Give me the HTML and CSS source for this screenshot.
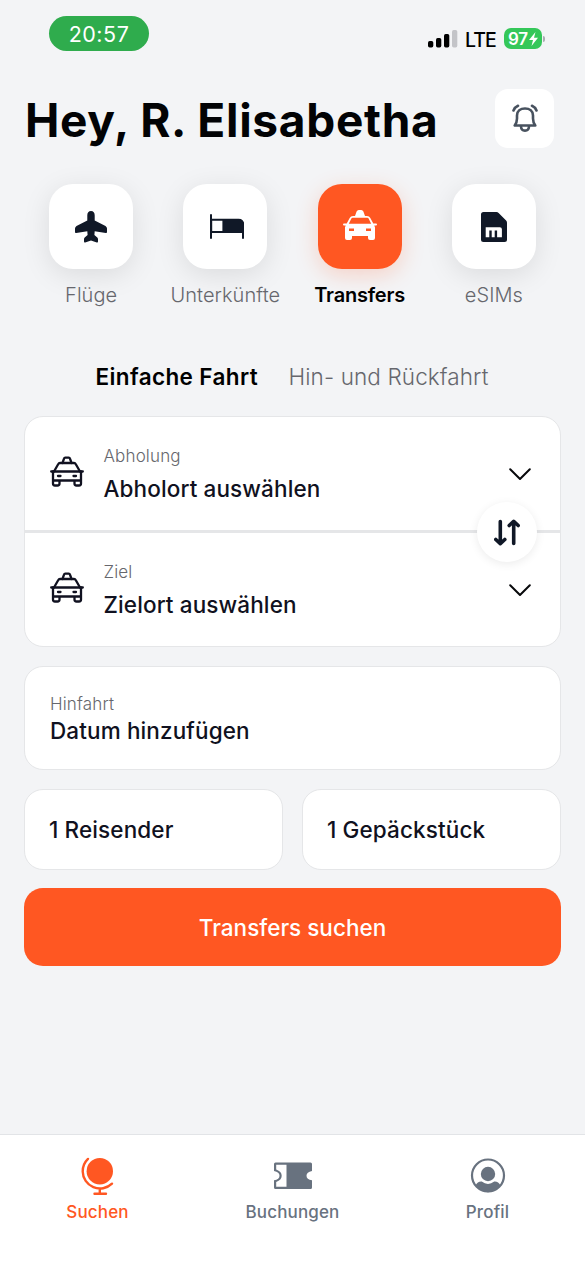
FILE: index.html
```
<!DOCTYPE html>
<html lang="de">
<head>
<meta charset="utf-8">
<title>Transfers</title>
<link rel="stylesheet" href="styles.css">
</head>
<body>
<svg class="defs" width="0" height="0" aria-hidden="true">
  <symbol id="taxi" viewBox="0 0 34 31">
    <g fill="none" stroke="currentColor" stroke-width="2.300" stroke-linecap="round" stroke-linejoin="round">
      <path d="M12.500 7 14 2.700Q14.300 1.700 15.300 1.700H18.700Q19.700 1.700 20 2.700L21.500 7"/>
      <path d="M4 15.500 8.300 8Q8.800 7 10 7H24Q25.200 7 25.700 8L30 15.500"/>
      <path d="M1.200 15.500H32.800"/>
      <path d="M3 15.500V27.500Q3 29.500 5 29.500H7.500Q9.500 29.500 9.500 27.500V24.500H24.500V27.500Q24.500 29.500 26.500 29.500H29Q31 29.500 31 27.500V15.500M3 24.500H31"/>
      <path d="M8 20H10.500M23.500 20H26"/>
    </g>
  </symbol>
  <symbol id="chevron" viewBox="0 0 22 13">
    <path d="M1.200 1.200 11 11 20.800 1.200" fill="none" stroke="currentColor" stroke-width="2" stroke-linecap="round" stroke-linejoin="round"/>
  </symbol>
</svg>

<div class="status">
  <div class="clock"><span>20:57</span></div>
  <div class="signals">
    <svg class="bars" viewBox="0 0 30 19"><rect x="0" y="12" width="5.300" height="6.500" rx="1.700"/><rect x="8" y="9" width="5.300" height="9.500" rx="1.700"/><rect x="16" y="5" width="5.300" height="13.500" rx="1.700"/><rect x="24" y="1" width="5.300" height="17.500" rx="1.700" fill="#c3c4c8"/></svg>
    <span class="lte">LTE</span>
    <div class="battery"><span>97</span><svg viewBox="0 0 9 14"><path d="M6.500 0 0 8H4L2.500 14 9 5.700H5Z" fill="#fff"/></svg></div>
    <i class="battery-cap"></i>
  </div>
</div>

<header class="header">
  <h1>Hey, R. Elisabetha</h1>
  <button class="bell" aria-label="Mitteilungen">
    <svg viewBox="0 0 26 28" fill="none" stroke="#48525f" stroke-width="2.600" stroke-linecap="round" stroke-linejoin="round">
      <path d="M2.700 21.500H23.300C21.800 19.500 21 17.500 21 14.500V11.500C21 7 17.500 4.500 13 4.500S5 7 5 11.500V14.500C5 17.500 4.200 19.500 2.700 21.500Z"/>
      <path d="M9 22.500C9.300 28 16.700 28 17 22.500M1.500 6.500Q2.800 3.200 6 1.800M24.500 6.500Q23.200 3.200 20 1.800"/>
    </svg>
  </button>
</header>

<nav class="products">
  <a class="product"><span class="tile"><svg class="plane" viewBox="0 0 32 32"><path d="M16 0C18.400 0 19.700 1.700 19.700 4.200V9.600L30.500 15Q32 16 32 17.500V21Q32 22.200 30.800 21.900L19.700 20.300 19.400 24 22.300 26.500Q23 27.200 23 28.200V30.500Q23 31.800 21.800 31.400L16 29.500 10.200 31.400Q9 31.800 9 30.500V28.200Q9 27.200 9.700 26.500L12.600 24 12.300 20.300 1.200 21.900Q0 22.200 0 21V17.500Q0 16 1.500 15L12.300 9.600V4.200C12.300 1.700 13.600 0 16 0Z"/></svg></span><span class="name">Flüge</span></a>
  <a class="product"><span class="tile"><svg class="bed" viewBox="0 0 34 25"><path d="M1 1V24M33 9V24" stroke="#101827" stroke-width="2" stroke-linecap="round"/><path d="M1 4.700H28.500Q34 4.700 34 10.200V19H1ZM2.200 6.700V17H12.400V6.700Z" fill-rule="evenodd"/></svg></span><span class="name">Unterkünfte</span></a>
  <a class="product active"><span class="tile"><svg class="cab" viewBox="0 0 34 30"><path fill-rule="evenodd" d="M12 6 13.600 1.600Q14.200 0 15.800 0H18.200Q19.800 0 20.400 1.600L22 6H24Q26.300 6 27.300 8L30.300 13.500H33Q34 13.500 34 14.500T33 15.500H31.300L32 17.500V28Q32 30 30 30H27Q25 30 25 28V26H9V28Q9 30 7 30H4Q2 30 2 28V17.500L2.700 15.500H1Q0 15.500 0 14.500T1 13.500H3.700L6.700 8Q7.700 6 10 6ZM9.500 7.700Q8.800 7.700 8.400 8.400L5.800 13.800H28.200L25.600 8.400Q25.200 7.700 24.500 7.700ZM6 18.500V21H11V18.500ZM23 18.500V21H28V18.500Z"/></svg></span><span class="name name-active">Transfers</span></a>
  <a class="product"><span class="tile"><svg class="sim" viewBox="0 0 26 30"><path fill-rule="evenodd" d="M2.500 0H15.500Q16.700 0 17.600 .9L25.100 8.600Q26 9.500 26 10.700V27.500Q26 30 23.500 30H2.500Q0 30 0 27.500V2.500Q0 0 2.500 0ZM4.700 15.200V25.300H8.300V18.500H10.700V25.300H13.700V18.500H16.100V25.300H20.900V17.200Q20.900 15.200 18.900 15.200Z"/></svg></span><span class="name">eSIMs</span></a>
</nav>

<div class="trip">
  <span class="trip-on">Einfache Fahrt</span>
  <span class="trip-off">Hin- und Rückfahrt</span>
</div>

<main class="form">
  <section class="card route">
    <div class="stop">
      <svg class="taxi"><use href="#taxi"/></svg>
      <div class="field"><span class="label">Abholung</span><span class="value">Abholort auswählen</span></div>
      <svg class="chevron"><use href="#chevron"/></svg>
    </div>
    <div class="stop">
      <svg class="taxi"><use href="#taxi"/></svg>
      <div class="field"><span class="label">Ziel</span><span class="value">Zielort auswählen</span></div>
      <svg class="chevron"><use href="#chevron"/></svg>
    </div>
    <button class="swap" aria-label="Tauschen">
      <svg viewBox="0 0 26 27" fill="none" stroke="#101827" stroke-width="3.600" stroke-linecap="round" stroke-linejoin="round"><path d="M6.300 2.500V24.500M1.800 20.500 6.300 24.700 10.800 20.500M19.700 24.500V2.500M15.200 6.500 19.700 2.300 24.200 6.500"/></svg>
    </button>
  </section>
  <section class="card date"><span class="label">Hinfahrt</span><span class="value">Datum hinzufügen</span></section>
  <div class="pair">
    <section class="card"><span class="value">1 Reisender</span></section>
    <section class="card"><span class="value">1 Gepäckstück</span></section>
  </div>
  <button class="submit"><span>Transfers suchen</span></button>
</main>

<nav class="tabbar">
  <a class="tab on"><svg viewBox="0 0 38 38"><circle cx="20.800" cy="14.200" r="13.200" fill="currentColor"/><path d="M9 1.900A17.300 17.300 0 0 0 3.700 14.500A17.300 17.300 0 0 0 33 26.700M20.800 31.500V36.500M15.500 36.700H27" fill="none" stroke="currentColor" stroke-width="2.400" stroke-linecap="round"/></svg><span>Suchen</span></a>
  <a class="tab"><svg viewBox="0 0 38 38"><path fill="currentColor" fill-rule="evenodd" d="M1.500 5.500H36.500Q38 5.500 38 7V14Q32.500 15 32.500 18.700T38 23.300V30.500Q38 32 36.500 32H1.500Q0 32 0 30.500V23.300Q5.500 22.300 5.500 18.700T0 14V7Q0 5.500 1.500 5.500ZM2.200 7.700V12.500Q7.700 14.500 7.700 18.700T2.200 25V29.800H12.500V7.700Z"/></svg><span>Buchungen</span></a>
  <a class="tab"><svg viewBox="0 0 38 38"><circle cx="19" cy="18.500" r="16" fill="none" stroke="currentColor" stroke-width="2.200"/><circle cx="19" cy="17" r="7.200" fill="currentColor"/><path fill="currentColor" d="M6.500 28.500C8 26 10 24.300 12.700 24.600Q19 29.300 25.300 24.600C28 24.300 30 26 31.500 28.500Q26 35.300 19 35.300T6.500 28.500Z"/></svg><span>Profil</span></a>
</nav>
</body>
</html>
```
FILE: styles.css
```
* { box-sizing: border-box; }
body {
  margin: 0;
  width: 585px;
  height: 1266px;
  display: flex;
  flex-direction: column;
  background: #f3f4f6;
  color: #101120;
  font-family: Inter, "Liberation Sans", sans-serif;
  overflow: hidden;
}
.defs { position: absolute; }
svg { display: block; flex: none; }
button { border: 0; padding: 0; font-family: inherit; }
span { white-space: nowrap; }

.status { height: 89px; padding: 16px 40px 0 49px; display: flex; justify-content: space-between; align-items: flex-start; }
.clock { width: 100px; height: 35px; border-radius: 18px; background: #2fac4d; color: #fff; font-size: 21.5px; line-height: 36px; text-align: center; font-weight: 400; letter-spacing: .5px; }
.signals { display: flex; align-items: center; padding-top: 11px; height: 34px; color: #000; }
.bars { width: 30px; height: 19px; }
.lte { width: 31px; margin: 2px 8px 0 7px; font-size: 19.5px; font-weight: 450; letter-spacing: -.9px; }
.battery { width: 38px; height: 21px; border-radius: 7px; background: #34c759; color: #fff; display: flex; align-items: center; justify-content: center; gap: 1px; font-size: 17px; font-weight: 600; letter-spacing: -.2px; }
.battery svg { width: 9px; height: 14px; }
.battery-cap { width: 2px; height: 6px; margin-left: 1px; border-radius: 0 2px 2px 0; background: #a9adb1; }

.header { height: 59px; padding: 0 31px 0 25px; display: flex; justify-content: space-between; align-items: center; }
h1 { margin: 2px 0 0; color: #020305; font-size: 46px; line-height: 58px; font-weight: 750; letter-spacing: .7px; white-space: nowrap; }
.bell { width: 59px; height: 59px; border-radius: 13px; background: #fff; display: grid; place-items: center; }
.bell svg { width: 26px; height: 28px; margin-top: -1px; }

.products { margin: 36px 24px 0; display: grid; grid-template-columns: repeat(4, 1fr); }
.product { display: flex; flex-direction: column; align-items: center; }
.tile { width: 84px; height: 85px; border-radius: 24px; background: #fff; display: grid; place-items: center; fill: #101827; box-shadow: 0 6px 28px rgba(0, 0, 0, .1); }
.active .tile { background: #ff5722; fill: #fff; box-shadow: 0 6px 22px rgba(255, 87, 34, .22); }
.plane { width: 32px; height: 32px; }
.bed { width: 34px; height: 25px; margin-left: 3px; }
.cab { width: 34px; height: 30px; margin-top: -4px; }
.sim { width: 26px; height: 30px; }
.name { margin-top: 12px; font-size: 20px; line-height: 28px; color: #66676d; font-weight: 350; letter-spacing: .05px; }
.name-active { color: #000; font-weight: 600; letter-spacing: -.2px; }

.trip { height: 107px; padding: 56px 0 0 95.5px; display: flex; gap: 30px; line-height: 24px; font-size: 22.5px; }
.trip-on { width: 163px; color: #000; font-weight: 600; letter-spacing: .38px; }
.trip-off { color: #66676d; font-weight: 350; letter-spacing: .1px; }

.form { padding: 0 24px; display: flex; flex-direction: column; gap: 19px; }
.card { border: 1.5px solid #e5e6e8; border-radius: 19px; background: #fff; display: flex; flex-direction: column; }
.route { position: relative; height: 231px; }
.stop { height: 113px; display: flex; align-items: center; padding: 0 29px 2px 25px; }
.stop + .stop { height: 116px; border-top: 3px solid #e5e6e8; }
.taxi { width: 34px; height: 31px; margin-top: -2px; color: #101120; }
.field { flex: 1; padding-left: 19.5px; display: flex; flex-direction: column; gap: 8px; }
.label { font-size: 17px; line-height: 24px; color: #66676d; font-weight: 350; letter-spacing: .15px; }
.value { font-size: 22.5px; line-height: 26px; font-weight: 470; letter-spacing: .12px; }
.chevron { width: 22px; height: 13px; margin-top: 3px; color: #08090b; }
.swap { position: absolute; right: 23px; top: 85px; width: 60px; height: 60px; border-radius: 50%; background: #fff; box-shadow: 0 2px 10px rgba(0, 0, 0, .08); display: grid; place-items: center; }
.swap svg { width: 26px; height: 27px; }
.date { height: 104px; padding: 24.5px 25px; gap: 2px; }
.pair { display: grid; grid-template-columns: 1fr 1fr; gap: 19px; margin-bottom: -1px; }
.pair .card { height: 81px; padding: 1px 24px 0; justify-content: center; }
.submit { height: 78px; border-radius: 19px; background: #ff5722; color: #fff; font-size: 22.5px; font-weight: 450; }

.tabbar { margin-top: auto; height: 132px; border-top: 1.5px solid #e2e4e7; background: #fff; padding-top: 22px; display: grid; grid-template-columns: repeat(3, 1fr); }
.tab { display: flex; flex-direction: column; align-items: center; color: #68727f; font-size: 17px; line-height: 24px; font-weight: 470; letter-spacing: .15px; }
.tab svg { width: 38px; height: 38px; margin-bottom: 5px; }
.on { color: #ff5722; }
```
